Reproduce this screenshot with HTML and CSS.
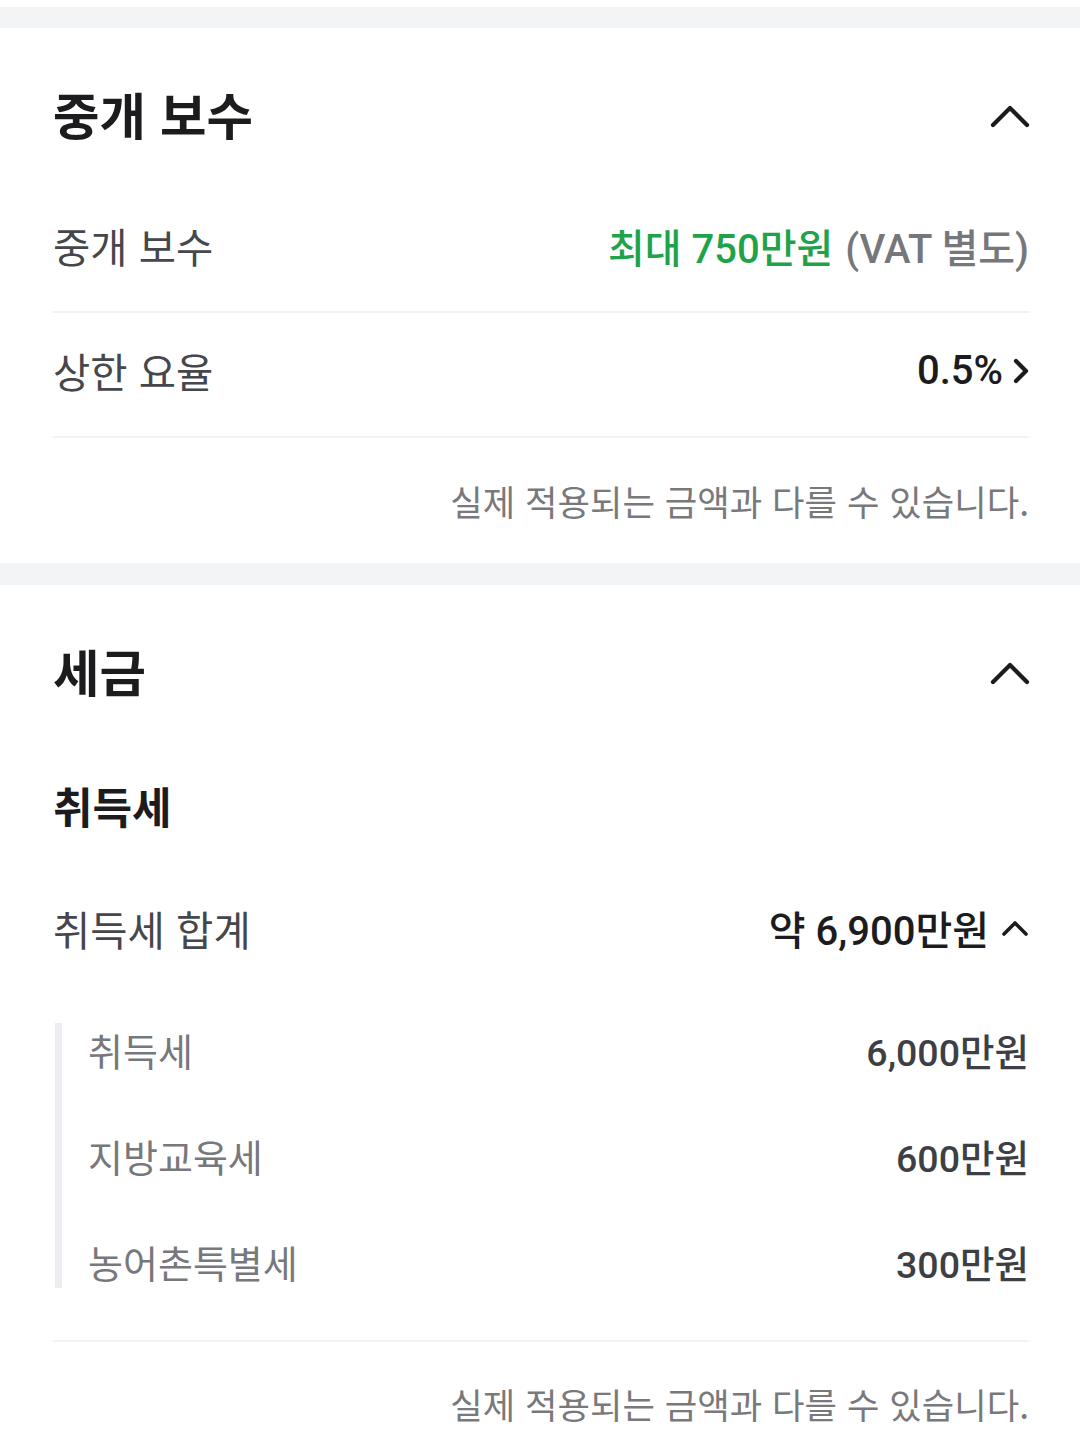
FILE: index.html
```html
<!DOCTYPE html>
<html lang="ko">
<head>
    <meta charset="UTF-8">
    <meta name="viewport" content="width=device-width, initial-scale=1.0">
    <title>중개 보수 · 세금</title>
    <link rel="stylesheet" href="styles.css">
</head>
<body>
    <div class="divider-band first"></div>

    <!-- 중개 보수 -->
    <section class="card">
        <div class="card-head">
            <h2>중개 보수</h2>
            <svg class="chev-lg" viewBox="0 0 40 24" aria-hidden="true">
                <path d="M3 21 L20 4 L37 21"/>
            </svg>
        </div>
        <div class="row line">
            <span class="label">중개 보수</span>
            <span class="value"><span class="green">최대 750만원</span><span class="muted">(VAT 별도)</span></span>
        </div>
        <div class="row line">
            <span class="label">상한 요율</span>
            <span class="value strong"><span>0.5%</span><svg class="chev-right" viewBox="0 0 16 26" aria-hidden="true"><path d="M3 3 L13 13 L3 23"/></svg></span>
        </div>
        <p class="note">실제 적용되는 금액과 다를 수 있습니다.</p>
    </section>

    <div class="divider-band"></div>

    <!-- 세금 -->
    <section class="card">
        <div class="card-head">
            <h2>세금</h2>
            <svg class="chev-lg" viewBox="0 0 40 24" aria-hidden="true">
                <path d="M3 21 L20 4 L37 21"/>
            </svg>
        </div>
        <h3 class="sub-head">취득세</h3>
        <div class="row">
            <span class="label">취득세 합계</span>
            <span class="value strong"><span>약 6,900만원</span><svg class="chev-sm" viewBox="0 0 28 18" aria-hidden="true"><path d="M3 15 L14 4 L25 15"/></svg></span>
        </div>
        <div class="breakdown">
            <div class="breakdown-row">
                <span class="b-label">취득세</span>
                <span class="b-value">6,000만원</span>
            </div>
            <div class="breakdown-row">
                <span class="b-label">지방교육세</span>
                <span class="b-value">600만원</span>
            </div>
            <div class="breakdown-row">
                <span class="b-label">농어촌특별세</span>
                <span class="b-value">300만원</span>
            </div>
        </div>
        <div class="line-top"></div>
        <p class="note short">실제 적용되는 금액과 다를 수 있습니다.</p>
    </section>
</body>
</html>
```

FILE: styles.css
```css
body {
    margin: 0;
    background: #fff;
    font-family: Roboto, "Noto Sans CJK KR", sans-serif;
    color: #1c1c1e;
}
.divider-band {
    height: 22px;
    background-color: #f3f4f6;
}
.divider-band.first {
    margin-top: 7px;
    height: 21px;
}
.card {
    padding: 0 51px 0 53px;
}
.card-head {
    height: 160px;
    display: flex;
    align-items: center;
    justify-content: space-between;
    padding-top: 10px;
    box-sizing: border-box;
}
.card-head h2 {
    margin: 0;
    font-family: "Noto Sans CJK KR", sans-serif;
    font-size: 50.5px;
    font-weight: 700;
    color: #1c1c1e;
}
.chev-lg {
    width: 40px;
    height: 24px;
    margin: 5px -1px 0 0;
}
.chev-lg path,
.chev-right path,
.chev-sm path {
    fill: none;
    stroke: #1c1c1e;
    stroke-width: 4.2;
    stroke-linecap: round;
    stroke-linejoin: round;
}
.row {
    height: 124px;
    display: flex;
    align-items: center;
    justify-content: space-between;
    padding-bottom: 8px;
    box-sizing: border-box;
}
.row.line {
    border-bottom: 2px solid #f2f2f3;
    height: 125px;
}
.label {
    font-family: "Noto Sans CJK KR", sans-serif;
    font-size: 40.5px;
    color: #46474c;
}
.value {
    font-size: 40px;
    display: flex;
    align-items: center;
}
.green {
    color: #1ea34a;
    font-weight: 500;
}
.muted {
    margin-left: 12px;
    color: #76777b;
    font-weight: 500;
}
.value.strong {
    font-weight: 500;
    color: #1c1c1e;
}
.chev-right {
    width: 16px;
    height: 26px;
    margin-left: 10px;
}
.chev-sm {
    width: 28px;
    height: 18px;
    margin-left: 12px;
}
.chev-sm path {
    stroke-width: 3.6;
}
.note {
    margin: 0;
    height: 125px;
    display: flex;
    align-items: center;
    justify-content: flex-end;
    font-family: "Noto Sans CJK KR", sans-serif;
    font-size: 35.3px;
    color: #79797c;
}
.note.short {
    height: 122px;
}
.sub-head {
    margin: 0;
    height: 125px;
    display: flex;
    align-items: center;
    padding-bottom: 6px;
    box-sizing: border-box;
    font-family: "Noto Sans CJK KR", sans-serif;
    font-size: 43px;
    font-weight: 700;
    color: #1c1c1e;
}
.breakdown {
    margin: 29px 0 52px 2px;
    border-left: 7px solid #ececf1;
    padding-left: 26px;
    display: flex;
    flex-direction: column;
    gap: 53px;
}
.breakdown-row {
    height: 53px;
    display: flex;
    align-items: center;
    justify-content: space-between;
}
.b-label {
    font-family: "Noto Sans CJK KR", sans-serif;
    font-size: 38px;
    color: #77787c;
}
.b-value {
    font-size: 37.5px;
    font-weight: 500;
    color: #3e3f45;
}
.line-top {
    border-top: 2px solid #f2f2f3;
}
```
